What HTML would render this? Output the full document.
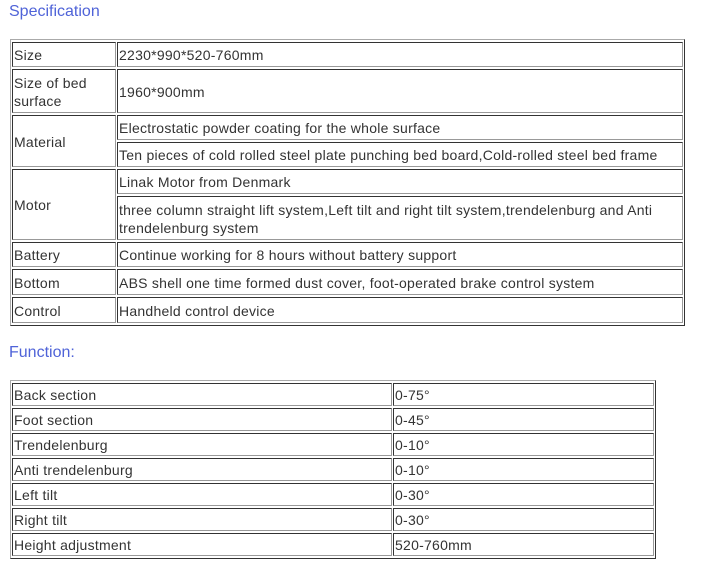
<!DOCTYPE html>
<html><head><meta charset="utf-8"><style>
body{margin:0;width:702px;height:568px;background:#fff;position:relative;overflow:hidden;font-family:"Liberation Sans",sans-serif;font-size:14px;letter-spacing:0.25px;color:#333}
.h{position:absolute;left:9px;color:#4f63d8;font-size:16px;letter-spacing:0}
.t{position:absolute;border:1px solid;border-color:#aaa #333 #333 #aaa;box-sizing:border-box}
.c{position:absolute;border:1px solid;border-color:#333 #999 #999 #333;box-sizing:border-box;padding-left:1px;padding-top:1px;display:flex;align-items:center;line-height:18px;white-space:nowrap}
.w{white-space:normal}
</style></head><body>
<div class="h" style="top:3px">Specification</div>
<div class="t" style="left:10px;top:39px;width:675px;height:287px"></div>
<div class="c" style="left:12px;top:42px;width:104px;height:25px">Size</div>
<div class="c" style="left:117px;top:42px;width:566px;height:25px">2230*990*520-760mm</div>
<div class="c w" style="left:12px;top:69px;width:104px;height:44px">Size of bed<br>surface</div>
<div class="c" style="left:117px;top:69px;width:566px;height:44px">1960*900mm</div>
<div class="c" style="left:12px;top:115px;width:104px;height:52px">Material</div>
<div class="c" style="left:117px;top:115px;width:566px;height:25px">Electrostatic powder coating for the whole surface</div>
<div class="c" style="left:117px;top:142px;width:566px;height:25px">Ten pieces of cold rolled steel plate punching bed board,Cold-rolled steel bed frame</div>
<div class="c" style="left:12px;top:169px;width:104px;height:71px">Motor</div>
<div class="c" style="left:117px;top:169px;width:566px;height:25px">Linak Motor from Denmark</div>
<div class="c w" style="left:117px;top:196px;width:566px;height:44px">three column straight lift system,Left tilt and right tilt system,trendelenburg and Anti<br>trendelenburg system</div>
<div class="c" style="left:12px;top:242px;width:104px;height:25px">Battery</div>
<div class="c" style="left:117px;top:242px;width:566px;height:25px">Continue working for 8 hours without battery support</div>
<div class="c" style="left:12px;top:269px;width:104px;height:26px">Bottom</div>
<div class="c" style="left:117px;top:269px;width:566px;height:26px">ABS shell one time formed dust cover, foot-operated brake control system</div>
<div class="c" style="left:12px;top:297px;width:104px;height:26px">Control</div>
<div class="c" style="left:117px;top:297px;width:566px;height:26px">Handheld control device</div>

<div class="h" style="top:344px">Function:</div>
<div class="t" style="left:10px;top:380px;width:646px;height:179px"></div>
<div class="c" style="left:12px;top:383px;width:380px;height:23px">Back section</div>
<div class="c" style="left:393px;top:383px;width:261px;height:23px">0-75°</div>
<div class="c" style="left:12px;top:408px;width:380px;height:23px">Foot section</div>
<div class="c" style="left:393px;top:408px;width:261px;height:23px">0-45°</div>
<div class="c" style="left:12px;top:433px;width:380px;height:23px">Trendelenburg</div>
<div class="c" style="left:393px;top:433px;width:261px;height:23px">0-10°</div>
<div class="c" style="left:12px;top:458px;width:380px;height:23px">Anti trendelenburg</div>
<div class="c" style="left:393px;top:458px;width:261px;height:23px">0-10°</div>
<div class="c" style="left:12px;top:483px;width:380px;height:23px">Left tilt</div>
<div class="c" style="left:393px;top:483px;width:261px;height:23px">0-30°</div>
<div class="c" style="left:12px;top:508px;width:380px;height:23px">Right tilt</div>
<div class="c" style="left:393px;top:508px;width:261px;height:23px">0-30°</div>
<div class="c" style="left:12px;top:533px;width:380px;height:23px">Height adjustment</div>
<div class="c" style="left:393px;top:533px;width:261px;height:23px">520-760mm</div>
</body></html>
